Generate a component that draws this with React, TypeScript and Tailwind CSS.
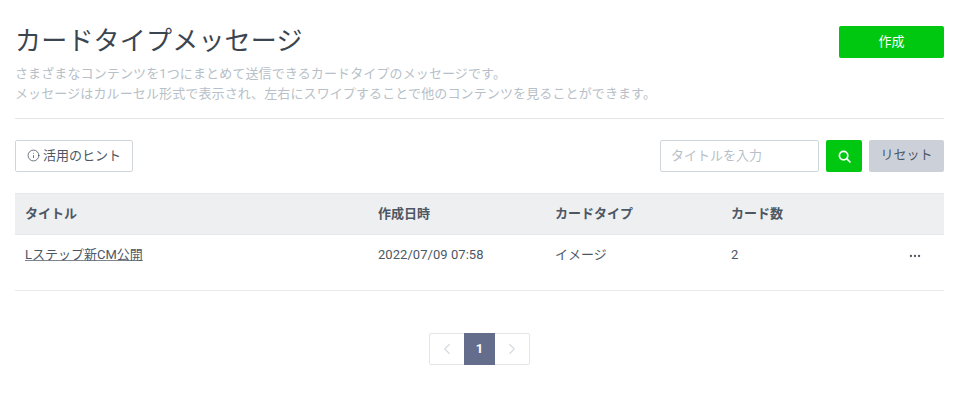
import { ChevronLeft, ChevronRight, Info, MoreHorizontal } from "lucide-react";

const FONT = "font-['Roboto','Noto_Sans_CJK_JP',sans-serif]";

export default function App() {
  return (
    <div className={`${FONT} w-[967px] h-[401px] bg-white pl-[15px] pr-[23px] pt-[26px] overflow-hidden text-[#4d5764]`}>
      {/* ヘッダー */}
      <div className="flex justify-between items-start">
        <div>
          <h1 className="text-[26px] leading-[30px] tracking-[0.2px] text-[#3b4550]">カードタイプメッセージ</h1>
          <p className="mt-[8px] text-[13px] leading-[20px] tracking-[0.12px] text-[#b7bfc8]">
            さまざまなコンテンツを1つにまとめて送信できるカードタイプのメッセージです。
            <br />
            メッセージはカルーセル形式で表示され、左右にスワイプすることで他のコンテンツを見ることができます。
          </p>
        </div>
        <button className="w-[105px] h-[32px] rounded-[2px] bg-[#00c70f] text-white text-[13px]">作成</button>
      </div>

      <div className="mt-[14px] border-t border-[#e3e6e9]" />

      {/* ツールバー */}
      <div className="mt-[21px] flex justify-between">
        <button className="h-[32px] w-[118px] pb-px flex items-center justify-center gap-[3px] border border-[#cfd5db] rounded-[2px] text-[13px]">
          <Info size={13} strokeWidth={1.5} />
          活用のヒント
        </button>
        <div className="flex gap-[7px]">
          <input
            placeholder="タイトルを入力"
            className="w-[159px] h-[32px] px-[10px] pb-px border border-[#cfd5db] rounded-[2px] text-[13px] placeholder:text-[#b7bfc8]"
          />
          <button className="w-[36px] h-[32px] flex items-center justify-center rounded-[2px] bg-[#00c70f] text-white">
            <svg width="13" height="13" viewBox="0 0 13 13" fill="none" stroke="currentColor" strokeWidth="1.7">
              <circle cx="5.6" cy="5.6" r="4.2" />
              <path d="M8.7 8.7 12 12" strokeLinecap="round" />
            </svg>
          </button>
          <button className="w-[75px] h-[32px] pb-[2px] rounded-[2px] bg-[#ccd1d9] text-[13px]">リセット</button>
        </div>
      </div>

      {/* テーブル */}
      <div className="mt-[21px] border-b border-[#e8eaed]">
        <div className="grid grid-cols-[353px_177px_176px_1fr] h-[42px] items-center pl-[10px] bg-[#edeff1] border-y border-[#e6e8eb] text-[13px] font-bold">
          <div>タイトル</div>
          <div>作成日時</div>
          <div>カードタイプ</div>
          <div>カード数</div>
        </div>
        <div className="grid grid-cols-[353px_177px_176px_1fr] h-[55px] pt-[9px] pl-[10px] text-[13px] leading-[22px]">
          <div className="underline decoration-[#7d858f]">Lステップ新CM公開</div>
          <div className="tracking-[0.05px]">2022/07/09 07:58</div>
          <div>イメージ</div>
          <div className="flex justify-between pr-[22px]">
            <span>2</span>
            <MoreHorizontal size={14} className="mt-[5px]" />
          </div>
        </div>
      </div>

      {/* ページネーション */}
      <div className="mt-[42px] flex justify-center">
        <div className="flex h-[32px] border border-[#e3e6e9] rounded-[2px]">
          <div className="w-[34px] flex items-center justify-center text-[#d5dae0]">
            <ChevronLeft size={18} strokeWidth={1.5} />
          </div>
          <div className="w-[31px] -my-px flex items-center justify-center bg-[#646d8c] text-white text-[13px] font-bold">1</div>
          <div className="w-[34px] flex items-center justify-center text-[#d5dae0]">
            <ChevronRight size={18} strokeWidth={1.5} />
          </div>
        </div>
      </div>
    </div>
  );
}
